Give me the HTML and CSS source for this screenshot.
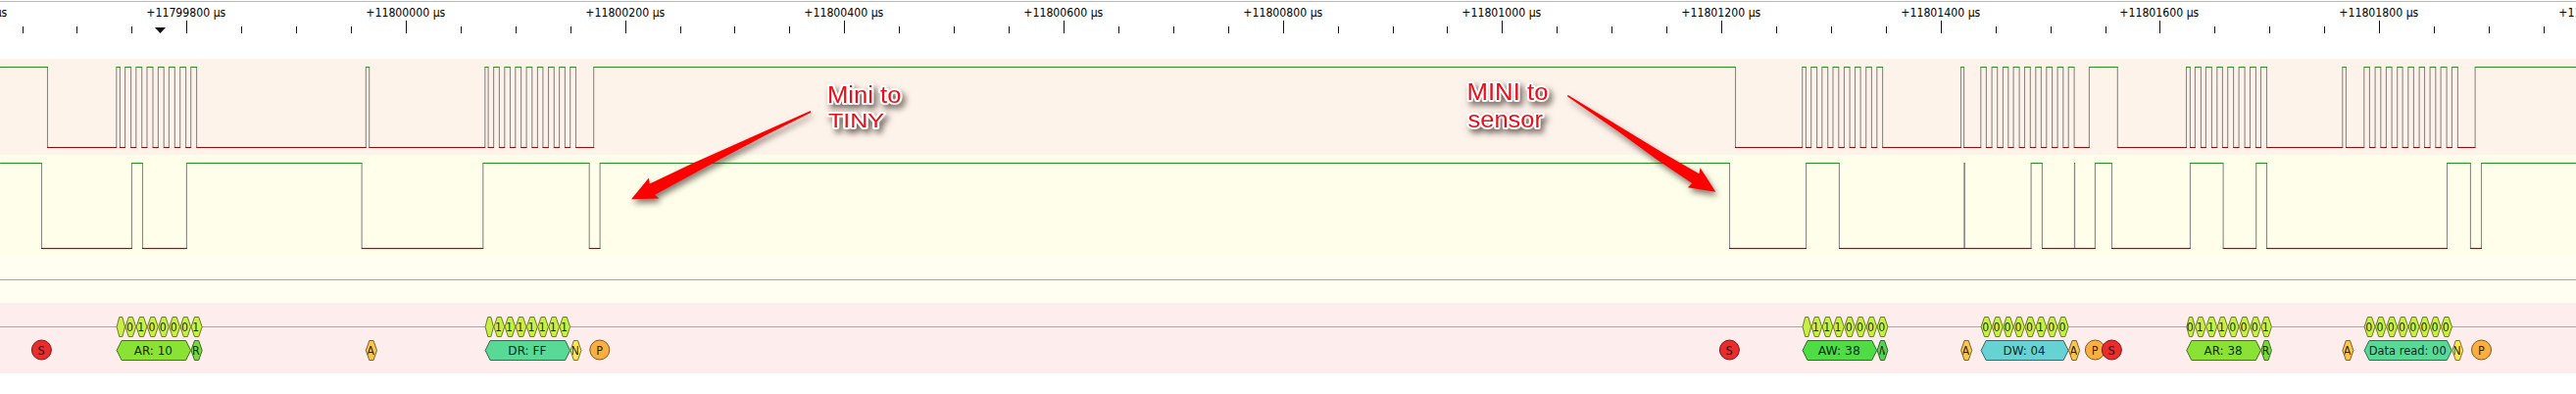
FILE: index.html
```html
<!DOCTYPE html>
<html lang="en">
<head>
<meta charset="utf-8">
<title>Logic analyzer trace</title>
<link rel="stylesheet" href="styles.css">
</head>
<body>
<main class="viewer">
  <svg class="ruler" id="ruler" height="60"></svg>
  <svg class="track track-clock" id="clock" height="98"></svg>
  <svg class="track track-data" id="data" height="102"></svg>
  <svg class="track track-empty" id="empty" height="49"></svg>
  <svg class="track track-decoder" id="decoder" height="72"></svg>
  <svg class="notes" viewBox="0 0 2628 402">
    <g class="arrow">
      <polygon points="644,203.3 662,181.5 662.8,187.4 708,166 827,113 827,115 781,138 730,165 668,198.7 672.3,202.6"/>
      <polygon points="1750.3,195.7 1734.6,171.3 1733.4,177.3 1699,157.5 1599.7,97 1598.8,98.3 1650,133.5 1692,164 1726.3,187 1721.8,191.2"/>
    </g>
    <g class="note">
      <text x="844" y="104.7" font-size="23.5" textLength="75.5" lengthAdjust="spacingAndGlyphs">Mini to</text>
      <text x="845" y="130" font-size="20.5" textLength="57" lengthAdjust="spacingAndGlyphs">TINY</text>
      <text x="1496.5" y="101.8" font-size="24.5" textLength="83" lengthAdjust="spacingAndGlyphs">MINI to</text>
      <text x="1497.5" y="130" font-size="24.5" textLength="76.5" lengthAdjust="spacingAndGlyphs">sensor</text>
    </g>
  </svg>
</main>
<script src="trace.js"></script>
</body>
</html>
```
FILE: styles.css
```css
body {
  margin: 0;
  background: #fff;
  font-family: "DejaVu Sans Condensed", "DejaVu Sans", sans-serif;
  font-stretch: condensed;
}
.viewer {
  position: relative;
  display: flex;
  flex-direction: column;
  width: 2628px;
  height: 402px;
  overflow: hidden;
}
.ruler, .track { display: block; width: 100%; flex: none; }
.track-clock { background: #fef3eb; }
.track-data { background: #fefeea; }
.track-empty { background: #fffef1; }
.track-decoder { background: #fdeeed; }
.notes { position: absolute; left: 0; top: 0; width: 2628px; height: 402px; }

.top-line { fill: #b4bbb5; }
.tick { fill: #111; }
.ruler text { font-size: 12.5px; fill: #000; text-anchor: middle; }

.halo-high { fill: #e0fbd2; }
.halo-low { fill: #fde4da; }
.high { fill: #2f8f2c; }
.low { fill: #861410; }
.edge { fill: #8b8781; }
.axis { fill: #aca6a4; }

.track-decoder text { font-size: 12.5px; fill: #000; fill-opacity: .85; text-anchor: middle; }
.cell { stroke-width: 1; }
.bit { fill: #c8ef45; stroke: #6d7a22; }
.ar { fill: #8ae234; stroke: #456f1c; }
.aw { fill: #4fdc45; stroke: #286e24; }
.rd { fill: #7bd63f; stroke: #3f6f22; }
.wr { fill: #53d254; stroke: #2b6b2a; }
.dr { fill: #58d996; stroke: #2d6e4c; }
.dw { fill: #66d2d4; stroke: #33696a; }
.ack { fill: #fac54f; stroke: #7d6227; }
.nack { fill: #fce653; stroke: #7e732b; }
.start { fill: #e92c2c; stroke: #7b1818; }
.stop { fill: #fbaf41; stroke: #80591f; }

.arrow { fill: #fe0000; filter: drop-shadow(2px 4px 3px rgba(60, 50, 40, .65)); }
.note {
  font-family: "Liberation Sans", Arial, sans-serif;
  font-stretch: normal;
  fill: #e8101a;
  stroke: #fff;
  stroke-width: 4;
  stroke-linejoin: round;
  paint-order: stroke;
  filter: drop-shadow(3px 4px 3px rgba(60, 50, 40, .7));
}
```
FILE: trace.js
```js
const NS = "http://www.w3.org/2000/svg";
const WIDTH = 2628;

function add(parent, tag, attrs, text) {
  const el = document.createElementNS(NS, tag);
  for (const key in attrs) el.setAttribute(key, attrs[key]);
  if (text !== undefined) el.textContent = text;
  parent.appendChild(el);
  return el;
}
function rect(parent, cls, x, y, width, height) {
  add(parent, "rect", { class: cls, x, y, width, height });
}

// Time ruler: a minor tick every 50 µs, a labelled one every 200 µs
const ruler = document.getElementById("ruler");
rect(ruler, "top-line", 0, 1, WIDTH, 1);
for (let k = -4; k <= 44; k++) {
  const x = Math.round(190.28 + k * 55.921);
  const major = k % 4 === 0;
  rect(ruler, "tick", x, major ? 21 : 27, 1, major ? 13 : 7);
  if (major) {
    add(ruler, "text", { x: x - 0.2, y: 17, textLength: 81, lengthAdjust: "spacingAndGlyphs" },
      "+" + (11799800 + k * 50) + " µs");
  }
}
add(ruler, "polygon", { class: "tick", points: "158,28 169,28 163.5,34" });

// Digital signals: level toggles at every edge, starting high
function signal(id, edges, top, bottom) {
  const svg = document.getElementById(id);
  let x = 0, high = true;
  for (const next of [...edges, WIDTH]) {
    const w = next - x + (next === WIDTH ? 0 : 0.5);
    const from = x === 0 ? 0 : x - 0.5;
    const inner = Math.max(0, next - x - 1);
    if (high) {
      rect(svg, "halo-high", x + 0.5, top - 1, inner, 3);
      rect(svg, "high", from, top, w + (x ? 0.5 : 0), 1);
    } else {
      rect(svg, "halo-low", x + 0.5, bottom - 1, inner, 3);
      rect(svg, "low", from, bottom, w + 0.5, 1);
    }
    x = next;
    high = !high;
  }
  for (const e of edges) rect(svg, "edge", e - 0.55, top + 1, 1.1, bottom - top - 1);
}
signal("clock", [48.5, 118.8, 122.4, 127.6, 133.6, 138.8, 144.7, 150, 156, 161.4, 167.2, 172.4, 178.3,
  183.7, 189.6, 194.7, 200.6, 373.3, 376.7, 494.8, 498.1, 503.6, 509.4, 514.8, 520.5, 525.8, 531.6,
  537.1, 542.8, 548.4, 553.9, 559.5, 565.3, 570.6, 576.4, 581.7, 587.5, 605.7, 1770.5, 1838.7, 1842.4,
  1847.7, 1853.6, 1858.8, 1864.7, 1870, 1875.8, 1881.4, 1887.1, 1892.5, 1898.1, 1903.7, 1909.4,
  1914.8, 1920.6, 2000.5, 2003.6, 2020.8, 2026.4, 2032.1, 2037.7, 2043.4, 2048.8, 2054.1, 2060.1,
  2065.5, 2071.3, 2076.8, 2082.4, 2087.8, 2093.6, 2099.1, 2104.8, 2110.2, 2116.1, 2131.4, 2160.3,
  2230.5, 2234.4, 2239.4, 2245.4, 2250.4, 2256.4, 2261.8, 2267.4, 2272.7, 2278.6, 2284.1, 2290.1,
  2295.5, 2301.4, 2306.5, 2312.5, 2389.8, 2393.4, 2411.8, 2417.4, 2423.1, 2428.8, 2434.4, 2440.1,
  2445.7, 2451.1, 2456.8, 2462.4, 2468.1, 2473.5, 2479.1, 2484.8, 2490.1, 2496.1, 2501.4, 2507.4,
  2525.1], 8, 90);
signal("data", [42.5, 134.4, 145.5, 190.4, 369.1, 492.8, 601.2, 612.1, 1764.5, 1842.6, 1876.4, 2003.9,
  2004.3, 2072.1, 2083.4, 2116.4, 2116.6, 2137.4, 2154.5, 2234.4, 2268.1, 2301.7, 2312.5, 2496.5,
  2520.4, 2531.5], 8, 95);
rect(document.getElementById("empty"), "axis", 0, 25, WIDTH, 1);

// Protocol decoder
const decoder = document.getElementById("decoder");
rect(decoder, "axis", 0, 24, WIDTH, 1);
let clipCount = 0;

function cell(cls, a, b, row, label) {
  const y = row ? 38.5 : 14.5, h = 20, m = y + h / 2;
  const s = b - a > 20 ? 5 : (b - a) * 0.3;
  a += 0.3;
  b -= 0.1;
  add(decoder, "polygon", {
    class: "cell " + cls,
    points: `${a},${m} ${a + s},${y} ${b - s},${y} ${b},${m} ${b - s},${y + h} ${a + s},${y + h}`
  });
  if (!label) return;
  const attrs = { x: (a + b) / 2 - (label.length > 1 ? 0.5 : 0.8), y: row ? 53 : 28.8 };
  if (label.length > 1) {
    attrs.textLength = { "Data read: 00": 79, "AW: 38": 43, "DW: 04": 43 }[label] || 39;
    attrs.lengthAdjust = "spacingAndGlyphs";
  } else if (row) {
    const half = label === "W" ? 2.6 : 3.3;
    const id = "clip" + clipCount++;
    const clip = add(decoder, "clipPath", { id });
    add(clip, "rect", { x: (a + b) / 2 - half - 0.3, y, width: half * 2, height: h });
    attrs["clip-path"] = `url(#${id})`;
  } else {
    attrs.textLength = 7;
    attrs.lengthAdjust = "spacingAndGlyphs";
  }
  add(decoder, "text", attrs, label);
}
function circle(cls, x, label) {
  add(decoder, "circle", { class: "cell " + cls, cx: x, cy: 48, r: 10 });
  add(decoder, "text", { x: x - 0.2, y: 53 }, label);
}
function bits(edges, labels) {
  labels.forEach((label, i) => cell("bit", edges[i], edges[i + 1], 0, label));
}

circle("start", 42.4, "S");
bits([118.8, 127.6, 138.8, 150, 161.4, 172.4, 183.7, 194.7, 206.3], ["", ..."0100001"]);
cell("ar", 118.8, 194.7, 1, "AR: 10");
cell("rd", 194.7, 206.3, 1, "R");
cell("ack", 373, 384.6, 1, "A");

bits([494.8, 503.6, 514.8, 525.8, 537.1, 548.4, 559.5, 570.6, 581.7], ["", ..."1111111"]);
cell("dr", 494.8, 581.7, 1, "DR: FF");
cell("nack", 581.7, 593, 1, "N");
circle("stop", 611.8, "P");

circle("start", 1764.4, "S");
bits([1838.7, 1847.7, 1858.8, 1870, 1881.4, 1892.5, 1903.7, 1914.8, 1926], ["", ..."1110000"]);
cell("aw", 1838.7, 1914.8, 1, "AW: 38");
cell("wr", 1914.8, 1926, 1, "W");
cell("ack", 2000.3, 2011.8, 1, "A");

bits([2020.8, 2032.1, 2043.4, 2054.1, 2065.5, 2076.8, 2087.8, 2099.1, 2110.2], [..."00000100"]);
cell("dw", 2020.8, 2110.2, 1, "DW: 04");
cell("ack", 2110.2, 2121.8, 1, "A");
circle("stop", 2137.4, "P");
circle("start", 2154.4, "S");

bits([2230.5, 2239.4, 2250.4, 2261.8, 2272.7, 2284.1, 2295.5, 2306.5, 2317.5], [..."01110001"]);
cell("ar", 2230.5, 2306.5, 1, "AR: 38");
cell("rd", 2306.5, 2317.5, 1, "R");
cell("ack", 2389.6, 2401, 1, "A");

bits([2411.8, 2423.1, 2434.4, 2445.7, 2456.8, 2468.1, 2479.1, 2490.1, 2501.6], [..."00000000"]);
cell("dr", 2411.8, 2501.4, 1, "Data read: 00");
cell("nack", 2501.6, 2512.8, 1, "N");
circle("stop", 2531.5, "P");
```
